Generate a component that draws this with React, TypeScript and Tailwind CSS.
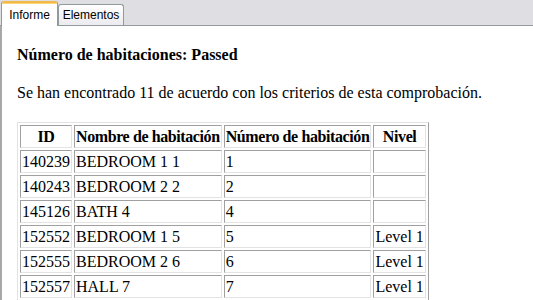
const rows = [
  { id: "140239", name: "BEDROOM 1 1", num: "1", level: "" },
  { id: "140243", name: "BEDROOM 2 2", num: "2", level: "" },
  { id: "145126", name: "BATH 4", num: "4", level: "" },
  { id: "152552", name: "BEDROOM 1 5", num: "5", level: "Level 1" },
  { id: "152555", name: "BEDROOM 2 6", num: "6", level: "Level 1" },
  { id: "152557", name: "HALL 7", num: "7", level: "Level 1" },
];

const cell =
  "p-px border border-t-[#a0a0a0] border-l-[#a0a0a0] border-r-[#e3e3e3] border-b-[#e3e3e3] h-[23px]";
const head = cell + " tracking-[-0.4px]";

export default function App() {
  return (
    <div className="w-[533px] h-[300px] overflow-hidden bg-white flex flex-col">
      {/* tab strip */}
      <div className="h-[26px] shrink-0 bg-[#dedee3] border-b border-[#919b9c] flex items-end pl-px font-['Liberation_Sans',sans-serif] text-[12px] text-black">
        <div className="relative -mb-px h-[25px] w-[57px] bg-white border-x border-[#919b9c] rounded-t-[3px] overflow-hidden flex items-center justify-center pb-px">
          <div className="absolute top-0 left-0 right-0 h-[3px] bg-[#f3b948] border-b border-[#fbd77a]" />
          <span className="mt-[3px]">Informe</span>
        </div>
        <div className="h-[21px] w-[66px] bg-gradient-to-b from-white to-[#ebebf0] border border-b-0 border-[#919b9c] rounded-t-[3px] flex items-center justify-center">
          Elementos
        </div>
      </div>

      {/* report body */}
      <div className="flex-1 border-l-2 border-[#a8a8a8] pl-[15px] pt-[19px] font-['Liberation_Serif',serif] text-[16px] leading-[19px] text-black">
        <h2 className="font-bold">Número de habitaciones: Passed</h2>
        <p className="mt-[19px]">Se han encontrado 11 de acuerdo con los criterios de esta comprobación.</p>
        <table className="mt-[20px] border-separate border-spacing-[2px] border border-t-[#e3e3e3] border-l-[#e3e3e3] border-r-[#a0a0a0] border-b-[#a0a0a0]">
          <thead>
            <tr>
              <th className={head}>ID</th>
              <th className={head}>Nombre de habitación</th>
              <th className={head}>Número de habitación</th>
              <th className={head}>Nivel</th>
            </tr>
          </thead>
          <tbody>
            {rows.map((r) => (
              <tr key={r.id}>
                <td className={cell}>{r.id}</td>
                <td className={cell}>{r.name}</td>
                <td className={cell}>{r.num}</td>
                <td className={cell}>{r.level}</td>
              </tr>
            ))}
          </tbody>
        </table>
      </div>
    </div>
  );
}
